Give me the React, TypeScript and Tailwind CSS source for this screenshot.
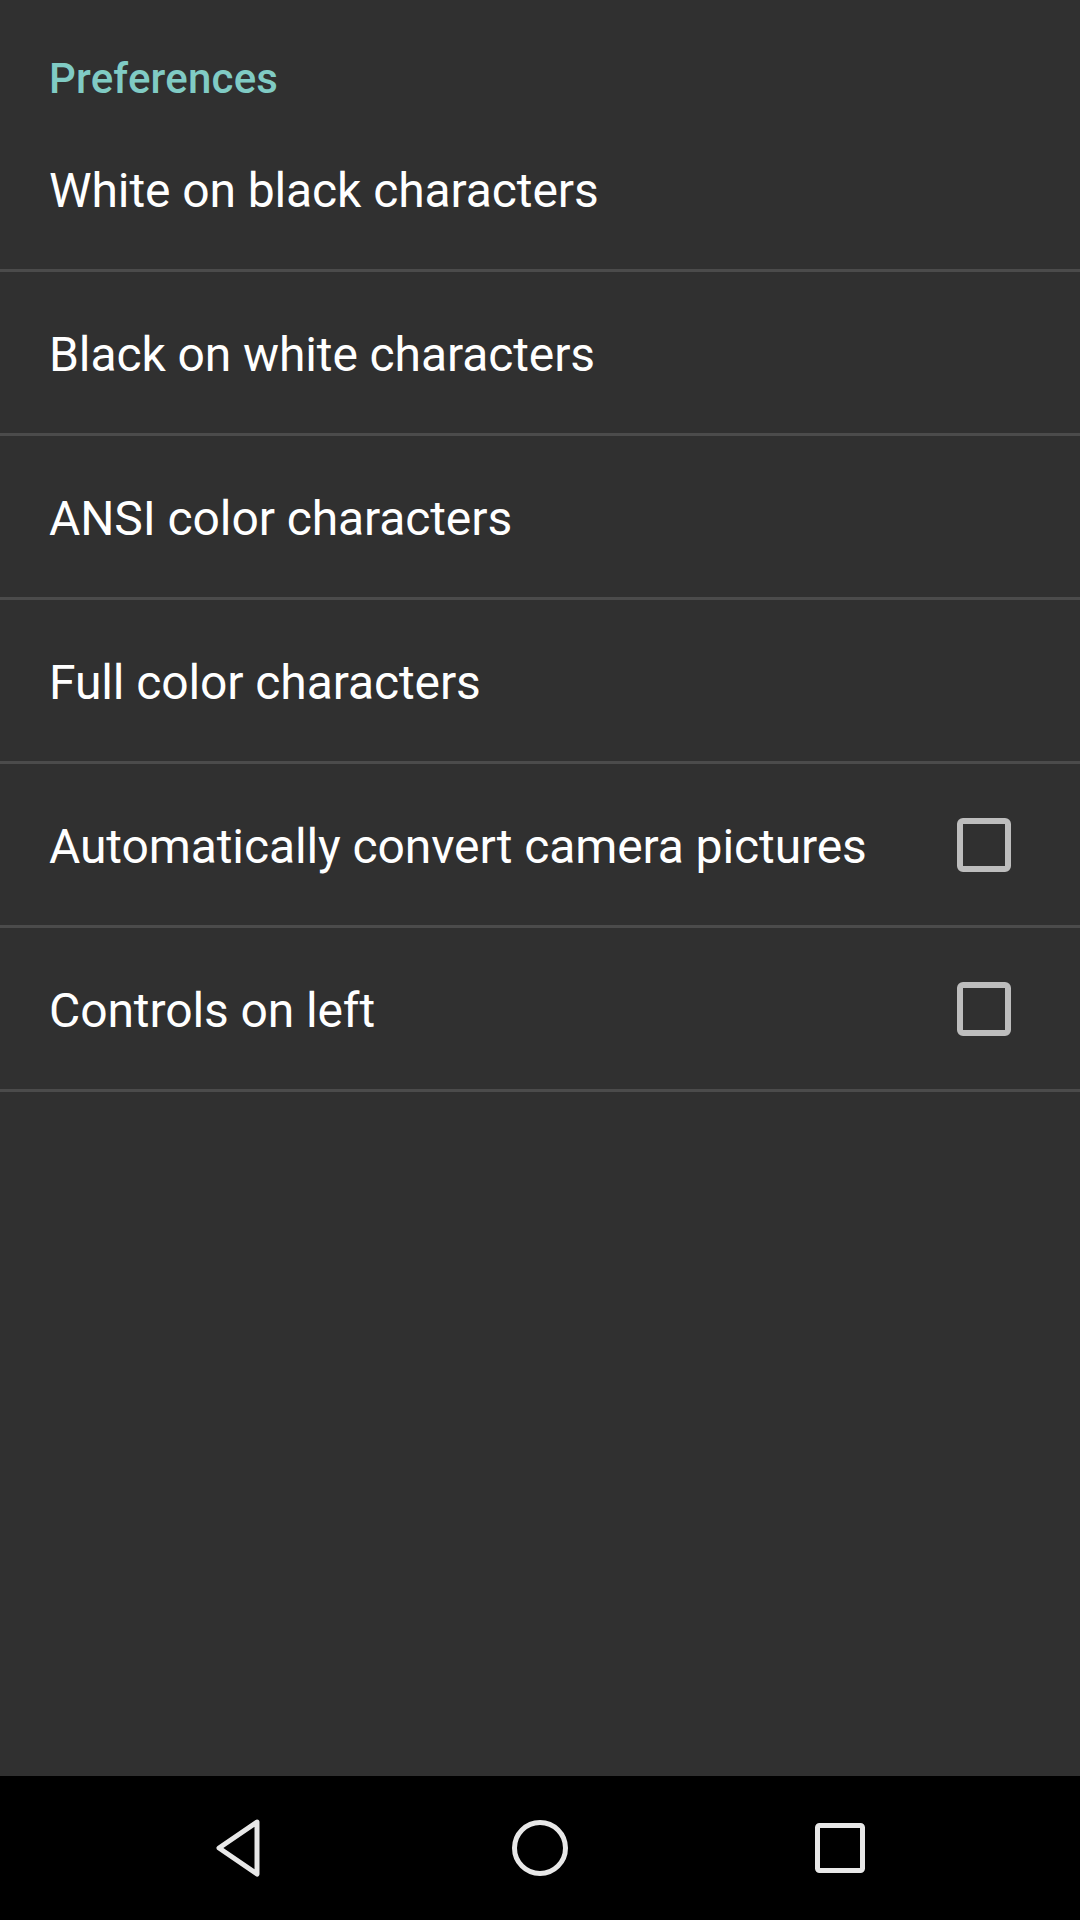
const rows: { label: string; checkbox?: boolean }[] = [
  { label: "White on black characters" },
  { label: "Black on white characters" },
  { label: "ANSI color characters" },
  { label: "Full color characters" },
  { label: "Automatically convert camera pictures", checkbox: true },
  { label: "Controls on left", checkbox: true },
];

const Checkbox = () => (
  <div className="w-[54px] h-[54px] border-[6px] border-[#bdbdbd] rounded-[6px]" />
);

const NavBar = () => (
  <div className="h-[144px] bg-black grid grid-cols-3 px-[90px] items-center">
    <div className="flex justify-center">
      <svg width="56" height="64" viewBox="0 0 56 64" fill="none">
        <path
          d="M45 6 L7 32 L45 58 Z"
          stroke="#e8e8e8"
          strokeWidth="5"
          strokeLinejoin="round"
        />
      </svg>
    </div>
    <div className="flex justify-center">
      <svg width="60" height="60" viewBox="0 0 60 60" fill="none">
        <circle cx="30" cy="30" r="25.5" stroke="#e8e8e8" strokeWidth="5" />
      </svg>
    </div>
    <div className="flex justify-center">
      <svg width="52" height="52" viewBox="0 0 52 52" fill="none">
        <rect x="3.5" y="3.5" width="45" height="45" rx="2" stroke="#e8e8e8" strokeWidth="5" />
      </svg>
    </div>
  </div>
);

export default function App() {
  return (
    <div
      className="w-[1080px] h-[1920px] bg-[#303030] flex flex-col"
      style={{ fontFamily: "Roboto, 'Noto Sans', sans-serif" }}
    >
      <div className="flex-1">
        <div className="h-[108px] pl-[49px] pt-[58px]">
          <div className="text-[42px] leading-none font-medium tracking-[0.2px] text-[#80cbc4]">
            Preferences
          </div>
        </div>
        {rows.map((row) => (
          <div
            key={row.label}
            className="h-[164px] border-b-[3px] border-[#4b4b4b] pl-[49px] pr-[69px] flex items-center justify-between"
          >
            <span className="text-[48px] leading-none tracking-[-0.1px] text-white pt-[4px]">
              {row.label}
            </span>
            {row.checkbox && <Checkbox />}
          </div>
        ))}
      </div>
      <NavBar />
    </div>
  );
}
